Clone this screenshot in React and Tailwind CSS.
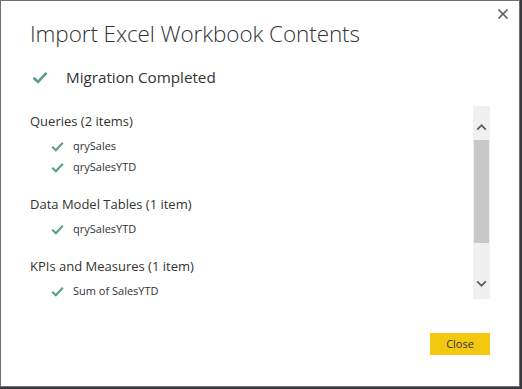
import React from 'react';

const Check = ({ className }) => (
  <svg viewBox="0 0 16 13" className={className} fill="none">
    <path d="M1.5 6.8 L6 11 L14.5 1.8" stroke="#5c9e8c" strokeWidth="2.6" strokeLinecap="butt" strokeLinejoin="miter" />
  </svg>
);

const sections = [
  { title: 'Queries (2 items)', items: ['qrySales', 'qrySalesYTD'] },
  { title: 'Data Model Tables (1 item)', items: ['qrySalesYTD'] },
  { title: 'KPIs and Measures (1 item)', items: ['Sum of SalesYTD'] },
];

export default function App() {
  return (
    <div className="w-[522px] h-[389px] bg-[#3a3a3e] font-['Open_Sans',sans-serif] text-[#333]">
      <div className="relative w-[520px] h-[387px] bg-white border border-[#717171] flex flex-col">
        <button className="absolute top-[6px] right-[9px] w-[14px] h-[14px] flex items-center justify-center">
          <svg viewBox="0 0 10 10" className="w-[10px] h-[10px]">
            <path d="M0.5 0.5 L9.5 9.5 M9.5 0.5 L0.5 9.5" stroke="#666" strokeWidth="1.6" />
          </svg>
        </button>

        <h1 className="pl-[29px] pt-[18px] text-[22.5px] leading-[30px] font-light text-[#333] tracking-[-0.1px]">
          Import Excel Workbook Contents
        </h1>

        <div className="flex items-center h-[24px] mt-[16px] pl-[31px]">
          <Check className="w-[16px] h-[13px]" />
          <span className="ml-[18px] text-[15.2px] text-[#333]">Migration Completed</span>
        </div>

        <div className="flex mt-[17px] h-[193px]">
          <div className="flex-1 pl-[29px] pt-[5px]">
            {sections.map((s, i) => (
              <div key={s.title} className={i > 0 ? 'mt-[17px]' : ''}>
                <div className="h-[20px] leading-[20px] text-[13px] text-[#333]">{s.title}</div>
                <div className="mt-[5px] flex flex-col gap-[1px]">
                  {s.items.map((it) => (
                    <div key={it} className="flex items-center h-[20px] pl-[21px]">
                      <Check className="w-[13px] h-[11px]" />
                      <span className="ml-[9px] text-[11px] text-[#333]">{it}</span>
                    </div>
                  ))}
                </div>
              </div>
            ))}
          </div>
          <div className="w-[17px] mr-[29px] bg-[#f0f0f0] flex flex-col items-center">
            <div className="h-[34px] flex items-end justify-center pb-[9px]">
              <svg viewBox="0 0 12 8" className="w-[11px] h-[7px]">
                <path d="M1 6.5 L6 1.5 L11 6.5" stroke="#606060" strokeWidth="2" fill="none" />
              </svg>
            </div>
            <div className="w-[15px] h-[103px] bg-[#c8c8c8]" />
            <div className="flex-1 flex items-end justify-center pb-[12px]">
              <svg viewBox="0 0 12 8" className="w-[11px] h-[7px]">
                <path d="M1 1.5 L6 6.5 L11 1.5" stroke="#606060" strokeWidth="2" fill="none" />
              </svg>
            </div>
          </div>
        </div>

        <div className="flex justify-end pr-[29px] mt-[34px]">
          <button className="w-[60px] h-[22px] bg-[#f2c811] text-[11px] text-[#333]">Close</button>
        </div>
      </div>
    </div>
  );
}
